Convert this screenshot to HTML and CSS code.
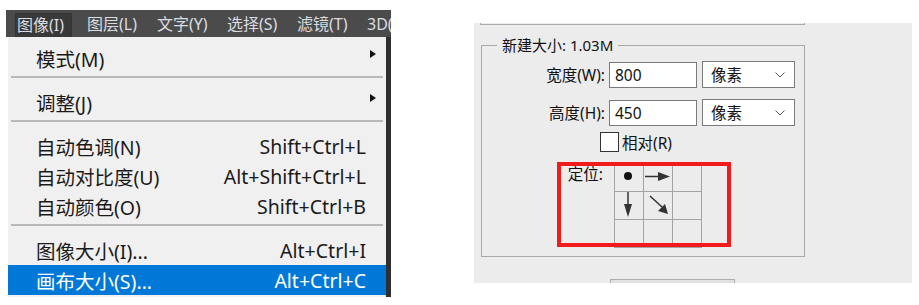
FILE: index.html
```html
<!DOCTYPE html>
<html lang="zh-CN">

<head>
    <meta charset="UTF-8">
    <meta name="viewport" content="width=device-width, initial-scale=1.0">
    <title>画布大小</title>
    <link rel="stylesheet" href="styles.css">
</head>

<body>
    <!-- Photoshop 图像菜单 -->
    <div class="ps">
        <nav class="menubar">
            <span class="menubar-item active">图像(I)</span>
            <span class="menubar-item">图层(L)</span>
            <span class="menubar-item">文字(Y)</span>
            <span class="menubar-item">选择(S)</span>
            <span class="menubar-item">滤镜(T)</span>
            <span class="menubar-item">3D(D)</span>
        </nav>
        <div class="ps-body">
            <ul class="dropdown">
                <li class="item has-sub"><span>模式(M)</span><i class="sub-arrow"></i></li>
                <li class="sep"></li>
                <li class="item has-sub"><span>调整(J)</span><i class="sub-arrow"></i></li>
                <li class="sep"></li>
                <li class="item"><span>自动色调(N)</span><span class="key">Shift+Ctrl+L</span></li>
                <li class="item"><span>自动对比度(U)</span><span class="key">Alt+Shift+Ctrl+L</span></li>
                <li class="item"><span>自动颜色(O)</span><span class="key">Shift+Ctrl+B</span></li>
                <li class="sep"></li>
                <li class="item"><span>图像大小(I)...</span><span class="key">Alt+Ctrl+I</span></li>
                <li class="item selected"><span>画布大小(S)...</span><span class="key">Alt+Ctrl+C</span></li>
            </ul>
            <div class="ps-edge"></div>
        </div>
    </div>

    <!-- 画布大小 对话框 -->
    <div class="dialog">
        <div class="group-prev"></div>
        <fieldset class="group">
            <legend>新建大小: 1.03M</legend>
            <div class="row">
                <label class="lbl">宽度(W):</label>
                <div class="field">800</div>
                <div class="unit">像素
                    <svg width="10" height="6" viewBox="0 0 10 6"><path d="M0.5 0.5 L5 5 L9.5 0.5" fill="none" stroke="#555" stroke-width="1"/></svg>
                </div>
            </div>
            <div class="row">
                <label class="lbl">高度(H):</label>
                <div class="field">450</div>
                <div class="unit">像素
                    <svg width="10" height="6" viewBox="0 0 10 6"><path d="M0.5 0.5 L5 5 L9.5 0.5" fill="none" stroke="#555" stroke-width="1"/></svg>
                </div>
            </div>
            <div class="check-row">
                <span class="checkbox"></span>
                <span>相对(R)</span>
            </div>
            <div class="anchor-row">
                <span class="anchor-lbl">定位:</span>
                <div class="anchor">
                    <div class="cell">
                        <svg width="28" height="27"><circle cx="13" cy="12" r="4" fill="#111"/></svg>
                    </div>
                    <div class="cell">
                        <svg width="28" height="27"><path d="M1 12.5 H18" stroke="#333" stroke-width="1.5"/><path d="M14 8 L26 12.5 L14 17 Z" fill="#333"/></svg>
                    </div>
                    <div class="cell"></div>
                    <div class="cell">
                        <svg width="28" height="27"><path d="M13 0 V16" stroke="#333" stroke-width="1.5"/><path d="M9 12 L13 25 L17 12 Z" fill="#333"/></svg>
                    </div>
                    <div class="cell">
                        <svg width="28" height="27"><path d="M6 4 L18 15" stroke="#333" stroke-width="1.5"/><path d="M14 19 L24 22 L21 12 Z" fill="#333"/></svg>
                    </div>
                    <div class="cell"></div>
                    <div class="cell"></div>
                    <div class="cell"></div>
                    <div class="cell"></div>
                </div>
                <div class="mark"></div>
            </div>
        </fieldset>
        <div class="btn"></div>
    </div>
</body>

</html>
```

FILE: styles.css
```css
* {
    margin: 0;
    padding: 0;
    box-sizing: border-box;
}

body {
    display: flex;
    align-items: flex-start;
    gap: 83px;
    padding-left: 6px;
    background-color: white;
    font-family: "Noto Sans", "Noto Sans CJK SC", sans-serif;
}

/* ---------- menu ---------- */

.ps {
    margin-top: 10px;
    width: 385px;
    flex-shrink: 0;
}

.menubar {
    display: flex;
    height: 27px;
    padding-top: 3px;
    padding-left: 9px;
    overflow: hidden;
    background-color: #4b4b4b;
}

.menubar-item {
    flex-shrink: 0;
    width: 70px;
    height: 24px;
    padding-left: 2px;
    font-size: 16px;
    line-height: 23px;
    color: #d9dde2;
    white-space: nowrap;
    overflow: hidden;
}

.menubar-item.active {
    width: 57px;
    margin-right: 13px;
    background-color: #393939;
    border: 1px solid #333;
    border-bottom: none;
    padding-left: 1px;
}

.ps-body {
    display: flex;
    height: 260px;
}

.dropdown {
    list-style: none;
    margin-left: 2px;
    width: 378px;
    padding-top: 6px;
    background-color: #f0f0f0;
}

.ps-edge {
    width: 5px;
    background-color: #2f2f2f;
}

.item {
    display: flex;
    justify-content: space-between;
    align-items: center;
    height: 30px;
    padding-left: 28px;
    padding-right: 20px;
    font-size: 19.5px;
    color: #1a1a1a;
    white-space: nowrap;
}

.item.has-sub {
    padding-right: 10px;
}

.sub-arrow {
    width: 0;
    height: 0;
    margin-top: -8px;
    border-top: 4.5px solid transparent;
    border-bottom: 4.5px solid transparent;
    border-left: 6px solid #111;
}

.item.selected {
    background-color: #0078d7;
    color: white;
}

.sep {
    height: 14px;
    padding: 3px 3px 9px 3px;
}

.sep::after {
    content: "";
    display: block;
    height: 2px;
    background-color: #b9b9b9;
}

/* ---------- dialog ---------- */

.dialog {
    margin-top: 23px;
    width: 438px;
    height: 260px;
    flex-shrink: 0;
    overflow: hidden;
    background-color: #ececec;
    font-size: 15.5px;
    color: #111;
}

.group-prev {
    margin-left: 6px;
    width: 325px;
    height: 2px;
    border: 1px solid #a9a9a9;
    border-top: none;
}

.group {
    margin-top: 11px;
    margin-left: 7px;
    width: 324px;
    border: 1px solid #a9a9a9;
    padding: 7px 0 8px 0;
}

.group legend {
    margin-left: 15px;
    padding: 0 5px;
    font-size: 15px;
    line-height: 18px;
}

.row {
    display: flex;
    align-items: center;
    height: 27px;
    margin-bottom: 11px;
}

.lbl {
    width: 123px;
    text-align: right;
}

.field {
    margin-left: 4px;
    width: 88px;
    height: 26px;
    padding-left: 5px;
    line-height: 24px;
    background-color: white;
    border: 1px solid #7a7a7a;
}

.unit {
    display: flex;
    justify-content: space-between;
    align-items: center;
    margin-left: 5px;
    width: 93px;
    height: 27px;
    padding: 0 9px 0 8px;
    background-color: white;
    border: 1px solid #7a7a7a;
}

.check-row {
    display: flex;
    align-items: center;
    gap: 3px;
    height: 20px;
    margin-top: -5px;
    padding-left: 118px;
}

.checkbox {
    width: 19px;
    height: 20px;
    background-color: white;
    border: 1px solid #333;
}

.anchor-row {
    position: relative;
    display: flex;
    align-items: flex-start;
    margin-top: 11px;
}

.anchor-lbl {
    width: 121px;
    text-align: right;
    line-height: 16px;
    padding-top: 3px;
}

.anchor {
    display: grid;
    grid-template-columns: repeat(3, 28px);
    grid-template-rows: repeat(3, 27px);
    gap: 1px;
    padding: 1px;
    margin-left: 11px;
    background-color: #a3a3a3;
}

.cell {
    background-color: #ececec;
}

.cell svg {
    display: block;
}

/* red marker drawn over the anchor grid */
.mark {
    position: absolute;
    left: 75px;
    top: -1px;
    width: 174px;
    height: 85px;
    border: 4px solid #f21b1b;
}

.btn {
    margin-top: 22px;
    margin-left: 136px;
    width: 125px;
    height: 24px;
    background-color: #e1e1e1;
    border: 1px solid #adadad;
}
```
